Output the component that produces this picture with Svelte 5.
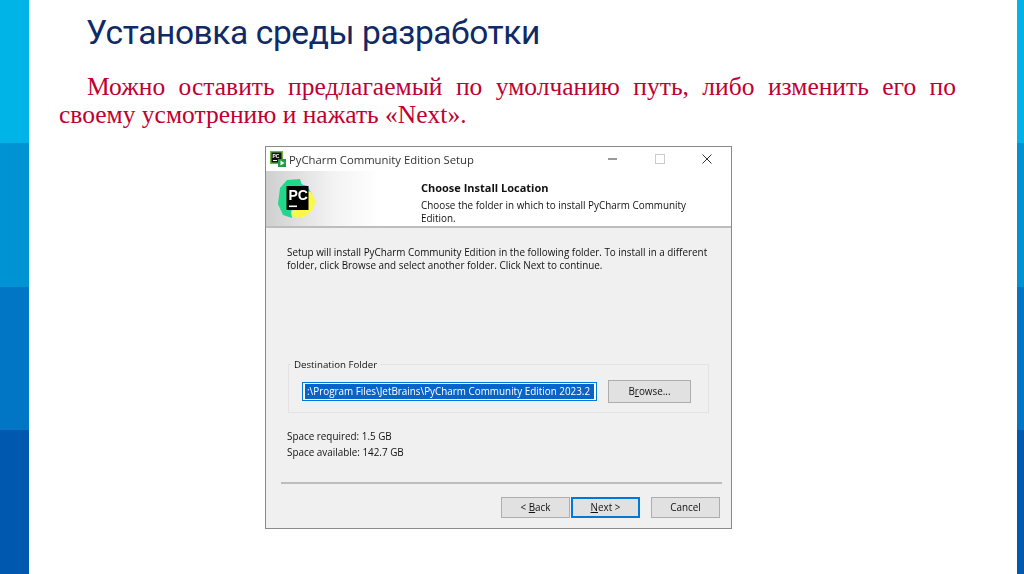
<script>
  const logoShapes = [
    { fill: '#07c3f2', d: 'M13 2 L29 7 L34 15 L24 22 Z' },
    { fill: '#fcf84a', d: 'M24 10 L33 13 L38 23 L33 33 L24 39 L13 37 Z' },
    { fill: '#21d789', d: 'M9 1 L22 0 L25 9 L13 33 L14 39 L5 36 L0 25 L2 9 Z' }
  ];
</script>

<div class="slide">
  <div class="band left">
    <i class="b1"></i><i class="b2"></i><i class="b3"></i><i class="b4"></i>
  </div>

  <main class="content">
    <h1>Установка среды разработки</h1>
    <p class="lead">Можно оставить предлагаемый по умолчанию путь, либо изменить его по своему усмотрению и нажать «Next».</p>

    <section class="dialog">
      <header class="titlebar">
        <svg class="ticon" viewBox="0 0 16 16" width="16" height="16" aria-hidden="true">
          <rect x="0" y="0" width="13" height="13" fill="#6fb53c" />
          <rect x="1.5" y="1.5" width="10" height="10" fill="#111" />
          <text x="2.5" y="7" font-size="5" font-weight="700" fill="#fff" font-family="Liberation Sans, sans-serif">PC</text>
          <rect x="3" y="9" width="4" height="1" fill="#fff" />
          <rect x="8" y="8" width="8" height="8" fill="#1e9e4a" />
          <path d="M10.5 9.5 L14.5 12 L10.5 14.5 Z" fill="#fff" />
        </svg>
        <span class="wtitle">PyCharm Community Edition Setup</span>
        <div class="wbtns">
          <span class="wbtn"><svg width="12" height="12" viewBox="0 0 12 12"><path d="M1 6h9" stroke="#333" stroke-width="1"/></svg></span>
          <span class="wbtn"><svg width="12" height="12" viewBox="0 0 12 12"><rect x="1.5" y="1.5" width="9" height="9" fill="none" stroke="#ccc"/></svg></span>
          <span class="wbtn"><svg width="12" height="12" viewBox="0 0 12 12"><path d="M1.5 1.5l9 9M10.5 1.5l-9 9" stroke="#333" stroke-width="1" fill="none"/></svg></span>
        </div>
      </header>

      <div class="banner">
        <div class="logoarea">
          <span class="blogo">
            <svg viewBox="0 0 38 40" width="38" height="40" aria-hidden="true">
              {#each logoShapes as s}
                <path d={s.d} fill={s.fill} />
              {/each}
              <rect x="8.5" y="7" width="22" height="24" fill="#000" />
              <rect x="11" y="26.5" width="8" height="1.6" fill="#fff" />
            </svg>
            <span class="pc">PC</span>
          </span>
        </div>
        <div class="bannertext">
          <strong>Choose Install Location</strong>
          <span>Choose the folder in which to install PyCharm Community<br />Edition.</span>
        </div>
      </div>

      <div class="body">
        <p class="intro">Setup will install PyCharm Community Edition in the following folder. To install in a different<br />folder, click Browse and select another folder. Click Next to continue.</p>

        <fieldset class="group">
          <legend>Destination Folder</legend>
          <div class="row">
            <div class="input"><span class="sel">:\Program Files\JetBrains\PyCharm Community Edition 2023.2</span></div>
            <button class="btn browse">B<u>r</u>owse...</button>
          </div>
        </fieldset>

        <div class="space">
          <div>Space required: 1.5 GB</div>
          <div>Space available: 142.7 GB</div>
        </div>

        <div class="sep"></div>

        <div class="actions">
          <button class="btn back">&lt; <u>B</u>ack</button>
          <button class="btn next"><u>N</u>ext &gt;</button>
          <button class="btn cancel">Cancel</button>
        </div>
      </div>
    </section>
  </main>

  <div class="band right">
    <i class="b1"></i><i class="b2"></i><i class="b3"></i><i class="b4"></i>
  </div>
</div>

<style>
  :global(body) { margin: 0; background: #fff; }

  .slide {
    width: 1024px;
    height: 574px;
    display: flex;
    overflow: hidden;
    background: #fff;
  }
  .band { display: flex; flex-direction: column; flex: none; height: 574px; }
  .band.left { width: 29px; }
  .band.right { width: 7px; }
  .band i { display: block; }
  .b1 { height: 143px; background: #00b4e8; }
  .b2 { height: 144px; background: #0093d4; }
  .b3 { height: 143px; background: #0076c4; }
  .b4 { height: 144px; background: #0059af; }

  .content { flex: 1; min-width: 0; padding: 0 61px 0 30px; }

  h1 {
    margin: 0;
    padding: 12px 0 0 27px;
    font: 400 33.5px/42px Roboto, "Open Sans", sans-serif;
    letter-spacing: -0.4px;
    color: #0f2a66;
  }
  .lead {
    margin: 19px 0 0;
    font: 400 25.5px/28px "Liberation Serif", serif;
    color: #c00030;
    text-align: justify;
    text-indent: 28px;
  }

  .dialog {
    width: 467px;
    height: 383px;
    box-sizing: border-box;
    margin: 17px 0 0 206px;
    border: 1px solid #8a8a8a;
    background: #f0f0f0;
    display: flex;
    flex-direction: column;
    font: 400 9.9px/13px "Open Sans", "Liberation Sans", sans-serif;
    color: #111;
    filter: blur(0.25px);
  }
  .titlebar {
    height: 24px;
    flex: none;
    background: #fff;
    display: flex;
    align-items: center;
    padding: 0 1px 0 4px;
    gap: 3px;
  }
  .ticon { flex: none; }
  .wtitle { font-size: 11.3px; color: #333; }
  .wbtns { margin-left: auto; display: flex; }
  .wbtn { width: 47px; display: flex; justify-content: center; }

  .blogo { position: relative; display: block; line-height: 0; width: 38px; }
  .blogo svg { display: block; }
  .pc {
    position: absolute;
    left: 10.5px;
    top: 9px;
    font: 700 14px/1 "Liberation Sans", sans-serif;
    color: #fff;
  }

  .banner {
    height: 57px;
    flex: none;
    display: flex;
    background: #fff;
    border-bottom: 2px solid #bdbdbd;
    box-sizing: border-box;
  }
  .logoarea {
    width: 150px;
    flex: none;
    padding: 8px 0 0 12px;
    box-sizing: border-box;
    background: linear-gradient(90deg, #cfcfcf 0, #f3f3f3 45%, #fff 75%);
  }
  .bannertext {
    padding: 10px 0 0 5px;
    display: flex;
    flex-direction: column;
  }
  .bannertext strong { font-size: 11px; font-weight: 700; line-height: 13px; margin-bottom: 5px; }

  .body { flex: 1; padding: 0 11px 0 15px; display: flex; flex-direction: column; min-height: 0; }
  .intro { margin: 18px 0 0 6px; line-height: 13px; }

  .group {
    margin: 86px 0 0 7px;
    width: 421px;
    height: 55px;
    box-sizing: border-box;
    border: 1px solid #e3e3e3;
    padding: 0 0 0 13px;
  }
  .group legend { padding: 0 3px; margin-left: -11px; line-height: 13px; font-size: 9.7px; }
  .row { display: flex; align-items: center; margin-top: 9px; gap: 11px; }
  .input {
    width: 295px;
    height: 19px;
    flex: none;
    box-sizing: border-box;
    border: 1px solid #0078d7;
    background: #fff;
    padding: 1px 2px;
    white-space: nowrap;
    overflow: hidden;
  }
  .sel {
    display: inline-block;
    width: 100%;
    height: 15px;
    line-height: 15px;
    padding-left: 2px;
    box-sizing: border-box;
    background: #0a64c8;
    color: #fff;
  }

  .btn {
    height: 21px;
    box-sizing: border-box;
    border: 1px solid #adadad;
    background: #e1e1e1;
    padding: 0;
    font: inherit;
    color: #111;
    text-align: center;
  }
  .browse { width: 83px; height: 23px; flex: none; }

  .space { margin: 15px 0 0 6px; line-height: 16px; }
  .sep { height: 2px; margin: 22px 0 0 0; width: 441px; background: #bdbdbd; }
  .actions { display: flex; margin-top: 13px; padding-left: 220px; }
  .back, .next, .cancel { width: 69px; }
  .next { border: 2px solid #0078d7; margin-left: 1px; }
  .cancel { margin-left: 11px; }
</style>
